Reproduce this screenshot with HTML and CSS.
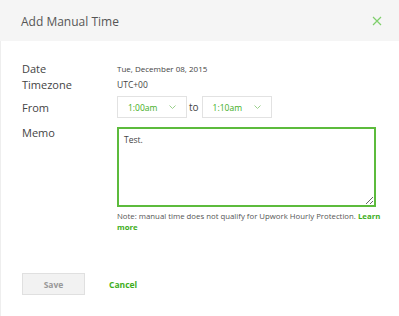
FILE: index.html
```html
<!DOCTYPE html>
<html lang="en">

<head>
    <meta charset="UTF-8">
    <title>Add Manual Time</title>
    <link rel="stylesheet" href="styles.css">
</head>

<body>
    <div class="modal">
        <div class="modal-header">
            <h2>Add Manual Time</h2>
            <button type="button" class="close-button" aria-label="Close">
                <svg width="10" height="10" viewBox="0 0 10 10">
                    <path d="M1 1 L9 9 M9 1 L1 9" stroke="#7fcf6c" stroke-width="1.2" fill="none" />
                </svg>
            </button>
        </div>
        <form class="modal-body" action="#" method="post">
            <div class="row row-date">
                <label>Date</label>
                <span class="value">Tue, December 08, 2015</span>
            </div>
            <div class="row row-zone">
                <label>Timezone</label>
                <span class="value">UTC+00</span>
            </div>
            <div class="row row-from">
                <label>From</label>
                <div class="time-group">
                    <div class="time-select">
                        <span>1:00am</span>
                        <svg width="7" height="4" viewBox="0 0 7 4">
                            <path d="M0.5 0.5 L3.5 3.5 L6.5 0.5" stroke="#9bd08c" fill="none" />
                        </svg>
                    </div>
                    <span class="to">to</span>
                    <div class="time-select">
                        <span>1:10am</span>
                        <svg width="7" height="4" viewBox="0 0 7 4">
                            <path d="M0.5 0.5 L3.5 3.5 L6.5 0.5" stroke="#9bd08c" fill="none" />
                        </svg>
                    </div>
                </div>
            </div>
            <div class="row row-memo">
                <label>Memo</label>
                <div class="memo-group">
                    <textarea class="memo">Test.</textarea>
                    <p class="note">Note: manual time does not qualify for Upwork Hourly Protection. <a href="#">Learn more</a></p>
                </div>
            </div>
            <div class="actions">
                <button type="button" class="save-button">Save</button>
                <a href="#" class="cancel-link">Cancel</a>
            </div>
        </form>
    </div>
</body>

</html>
```

FILE: styles.css
```css
body,
html {
    margin: 0;
    padding: 0;
    background: #fff;
    font-family: "Open Sans", Arial, sans-serif;
}

.modal {
    width: 399px;
    height: 316px;
    border-left: 1px solid #eee;
    box-sizing: border-box;
}

.modal-header {
    height: 40px;
    background: #f5f5f5;
    display: flex;
    align-items: center;
    justify-content: space-between;
    padding: 1px 17px 0 21px;
    margin-left: -1px;
}

.modal-header h2 {
    margin: 0;
    font-size: 12px;
    font-weight: normal;
    color: #555;
}

.close-button {
    border: none;
    background: none;
    padding: 0;
    width: 10px;
    height: 10px;
    display: flex;
    cursor: pointer;
}

.modal-body {
    padding: 19px 23px 0 21px;
}

.row {
    display: flex;
    align-items: center;
}

.row label {
    width: 95px;
    flex: none;
    font-size: 11px;
    color: #444;
}

.value {
    font-size: 8px;
    color: #444;
}

.row-zone .value {
    font-size: 8.5px;
}

.row-date {
    height: 16px;
}

.row-zone {
    height: 16px;
}

.row-from {
    margin-top: 4px;
}

.time-group {
    display: flex;
    align-items: center;
}

.time-select {
    width: 70px;
    height: 22px;
    box-sizing: border-box;
    border: 1px solid #e2e2e2;
    display: flex;
    align-items: center;
    justify-content: space-between;
    padding: 0 10px 0 10px;
    font-size: 8.5px;
    color: #3eae1c;
}

.to {
    font-size: 10px;
    color: #444;
    margin: 0 3px 0 2px;
}

.row-memo {
    align-items: flex-start;
    margin-top: 9px;
}

.row-memo label {
    line-height: 12px;
}

.memo-group {
    flex: 1;
}

.memo {
    display: block;
    width: 100%;
    height: 80px;
    box-sizing: border-box;
    border: 2px solid #5cbb3c;
    padding: 5px 5px;
    font-family: "Open Sans", Arial, sans-serif;
    font-size: 8.5px;
    color: #444;
    resize: vertical;
    outline: none;
}

.note {
    margin: 4px -8px 0 0;
    font-size: 7.8px;
    line-height: 11px;
    color: #555;
}

.note a {
    color: #3eae1c;
    font-weight: bold;
    text-decoration: none;
}

.actions {
    display: flex;
    align-items: center;
    margin-top: 40px;
}

.save-button {
    width: 63px;
    height: 22px;
    border: 1px solid #e0e0e0;
    background: #f2f2f2;
    color: #999;
    font-family: "Open Sans", Arial, sans-serif;
    font-size: 8.5px;
    font-weight: bold;
    margin: 0;
    padding: 0;
}

.cancel-link {
    margin-left: 24px;
    font-size: 8.5px;
    font-weight: bold;
    color: #3eae1c;
    text-decoration: none;
}
```
